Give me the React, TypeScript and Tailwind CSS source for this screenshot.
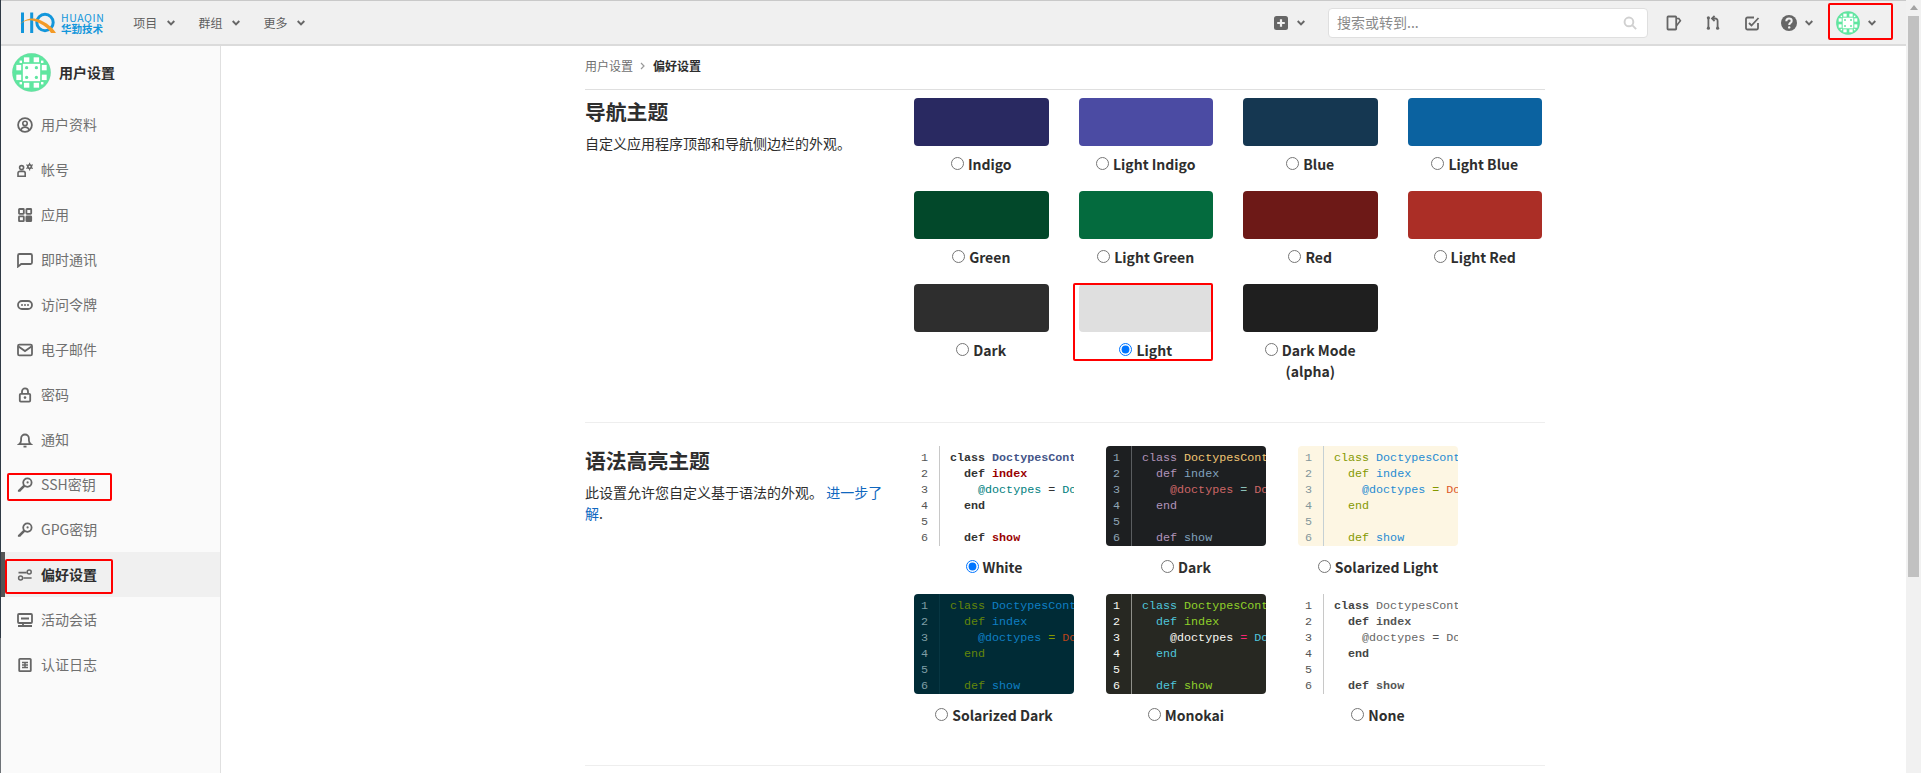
import React from "react";

const S = ({ children, className = "" }: { children: React.ReactNode; className?: string }) => (
  <svg viewBox="0 0 16 16" className={`h-4 w-4 shrink-0 ${className}`} fill="none" stroke="currentColor" strokeWidth={1.8}>
    {children}
  </svg>
);

const icons: Record<string, React.ReactNode> = {
  profile: (
    <>
      <circle cx="8" cy="8" r="6.9" />
      <circle cx="8" cy="6.4" r="2.2" strokeWidth={1.6} />
      <path d="M3.8 12.8c.9-1.8 2.4-2.7 4.2-2.7s3.3.9 4.2 2.7" strokeWidth={1.6} />
    </>
  ),
  account: (
    <>
      <circle cx="4.6" cy="5.6" r="2" strokeWidth={1.6} />
      <path d="M1 14.2v-3a1.8 1.8 0 0 1 1.8-1.8h3.6a1.8 1.8 0 0 1 1.8 1.8v3z" strokeWidth={1.6} />
      <circle cx="12.6" cy="4.6" r="2.6" fill="currentColor" stroke="none" />
      <path d="M12.6.8v7.6M9.3 2.7l6.6 3.8M15.9 2.7 9.3 6.5" strokeWidth={1.1} />
      <circle cx="12.6" cy="4.6" r=".9" fill="#fafafa" stroke="none" />
    </>
  ),
  apps: (
    <>
      <rect x="2" y="2" width="4.8" height="4.8" rx=".5" />
      <rect x="9.4" y="2" width="4.8" height="4.8" rx=".5" />
      <rect x="2" y="9.4" width="4.8" height="4.8" rx=".5" />
      <rect x="9.4" y="9.4" width="4.8" height="4.8" rx=".5" fill="currentColor" />
    </>
  ),
  chat: <path d="M2.5 2h11A1.5 1.5 0 0 1 15 3.5v7a1.5 1.5 0 0 1-1.5 1.5H4.2L1 14.6V3.5A1.5 1.5 0 0 1 2.5 2z" />,
  token: (
    <>
      <rect x="1" y="4" width="14" height="8" rx="4" />
      <circle cx="5" cy="8" r="1" fill="currentColor" stroke="none" />
      <circle cx="8" cy="8" r="1" fill="currentColor" stroke="none" />
      <circle cx="11" cy="8" r="1" fill="currentColor" stroke="none" />
    </>
  ),
  mail: (
    <>
      <rect x="1" y="2.6" width="14" height="10.8" rx="1.4" />
      <path d="m1.5 4.5 6.5 4.6 6.5-4.6" />
    </>
  ),
  lock: (
    <>
      <rect x="2.8" y="6.8" width="10.4" height="7.8" rx="1" />
      <path d="M5 6.8V4.4a3 3 0 0 1 6 0v2.4" />
      <circle cx="8" cy="10.6" r="1.3" fill="currentColor" stroke="none" />
    </>
  ),
  bell: (
    <>
      <path d="M2.2 12.2h11.6c-1.3-1-1.9-2-1.9-4V6.4a3.9 3.9 0 0 0-7.8 0v1.8c0 2-.6 3-1.9 4z" />
      <path d="M6.5 14.6h3" />
    </>
  ),
  key: (
    <>
      <circle cx="10.4" cy="5.6" r="4.2" />
      <circle cx="10.6" cy="5.4" r="1.1" fill="currentColor" stroke="none" />
      <path d="M7.4 8.6 2.2 13.8v1" strokeWidth={2.6} />
    </>
  ),
  prefs: (
    <>
      <path d="M1.5 5.6h8.2M6.4 11H14.6" strokeWidth={1.6} />
      <circle cx="12.2" cy="5" r="2" strokeWidth={1.5} />
      <circle cx="3.6" cy="11" r="2" strokeWidth={1.5} />
    </>
  ),
  monitor: (
    <>
      <rect x="1" y="2" width="14" height="9" rx="1" />
      <path d="M4 6.5h8" strokeWidth={2} />
      <path d="M6 11v2.6M1 14h14" strokeWidth={1.8} />
    </>
  ),
  log: (
    <>
      <rect x="2.2" y="1.8" width="11.6" height="12.4" rx=".8" />
      <path d="M5 5.6h6M5 8h6M5 10.5h6M8 5v6" strokeWidth={1.5} />
    </>
  ),
};

const Chevron = () => (
  <svg viewBox="0 0 8 6" className="h-[6px] w-[8px] shrink-0" fill="none" stroke="#666" strokeWidth={1.9}>
    <path d="m.7 1 3.3 3.3L7.3 1" />
  </svg>
);

function Avatar({ className }: { className: string }) {
  const white: number[][] = [
    [44, 16, 20, 18], [80, 16, 20, 18], [44, 110, 20, 18], [80, 110, 20, 18],
    [16, 44, 18, 20], [16, 80, 18, 20], [110, 44, 18, 20], [110, 80, 18, 20],
    [28, 28, 9, 9], [107, 28, 9, 9], [28, 107, 9, 9], [107, 107, 9, 9],
  ];
  const dots: number[][] = [[54, 54], [90, 54], [54, 90], [90, 90]];
  return (
    <svg viewBox="0 0 144 144" className={className}>
      <circle cx="72" cy="72" r="71" fill="#5fe6a0" stroke="#00000018" strokeWidth="2" />
      <rect x="40" y="40" width="64" height="64" fill="#fff" />
      {white.map((r, i) => (
        <rect key={i} x={r[0]} y={r[1]} width={r[2]} height={r[3]} fill="#fff" />
      ))}
      {dots.map((d, i) => (
        <circle key={i} cx={d[0]} cy={d[1]} r="6" fill="#5fe6a0" />
      ))}
    </svg>
  );
}

const Logo = () => (
  <div className="flex items-center">
    <svg viewBox="0 0 37 22" className="h-[22px] w-[37px]">
      <rect x="1" y="0.5" width="3" height="20.5" fill="#1296db" />
      <rect x="10.2" y="0.5" width="3" height="20.5" fill="#1296db" />
      <circle cx="25" cy="10.5" r="8.2" fill="none" stroke="#1296db" strokeWidth="3" />
      <path d="M0 12.5C6 7 12 7.5 19 11c6 3 10 6 12 10h5c-4-6-9-10-16-13C12 4.600 4 7 0 12.500z" fill="#f39a26" />
    </svg>
    <div className="ml-[4px] flex flex-col text-[#1296db]">
      <span className="text-[10.500px] leading-[11px] tracking-[0.6px]">HUAQIN</span>
      <span className="text-[10.500px] font-bold leading-[11px]">华勤技术</span>
    </div>
  </div>
);

const NavItem = ({ label, className }: { label: string; className: string }) => (
  <div className={`flex items-center gap-[10px] text-[12px] text-[#5f5f5f] ${className}`}>
    <span>{label}</span>
    <Chevron />
  </div>
);

function Header() {
  return (
    <header className="flex h-[46px] shrink-0 items-center border-t border-b-2 border-t-[#c9c9c9] border-b-[#dbdbdb] bg-[#f0f0f0]">
      <div className="ml-[19px]">
        <Logo />
      </div>
      <NavItem label="项目" className="ml-[29px]" />
      <NavItem label="群组" className="ml-[23px]" />
      <NavItem label="更多" className="ml-[23px]" />
      <div className="ml-auto flex items-center text-[#666]">
        <svg viewBox="0 0 14 14" className="h-[14px] w-[14px]">
          <rect width="14" height="14" rx="2.500" fill="#666" />
          <path d="M7 3.200v7.600M3.200 7h7.600" stroke="#f0f0f0" strokeWidth="2.200" />
        </svg>
        <div className="ml-[9px]">
          <Chevron />
        </div>
        <div className="relative ml-[23px] flex h-[30px] w-[320px] items-center rounded-[4px] border border-[#dfdfdf] bg-white pl-[8px] text-[14px] text-[#8a8a8a]">
          搜索或转到...
          <svg viewBox="0 0 16 16" className="absolute right-[10px] top-[7px] h-[14px] w-[14px]" fill="none" stroke="#d0d0d0" strokeWidth="2.200">
            <circle cx="6.800" cy="6.800" r="5" />
            <path d="m10.500 10.500 4.500 4.500" />
          </svg>
        </div>
        <S className="ml-[18px]">
          <path d="M2.200 1.500h7.300c.4 0 .7.300.7.700v11.600c0 .4-.3.700-.7.700H2.200a.7.700 0 0 1-.7-.700V2.200c0-.4.300-.7.700-.700z" />
          <path d="M10.500 3.500h2.300l1.600 2.200-3.900 5" strokeWidth={1.6} />
        </S>
        <S className="ml-[23px]">
          <path d="M3.400 3.500v9" />
          <circle cx="3.400" cy="2.800" r="1.600" fill="currentColor" stroke="none" />
          <circle cx="3.400" cy="13.200" r="1.600" fill="currentColor" stroke="none" />
          <path d="M12.600 12V6a2.500 2.500 0 0 0-2.500-2.500H8" />
          <path d="M9.600 1 7 3.500 9.600 6" />
          <circle cx="12.600" cy="13.200" r="1.600" fill="currentColor" stroke="none" />
        </S>
        <S className="ml-[23px]">
          <path d="M14 8v5a1.500 1.500 0 0 1-1.500 1.500h-9A1.500 1.500 0 0 1 2 13V4a1.500 1.500 0 0 1 1.500-1.500H10" />
          <path d="m5 8 2.500 2.500L14.500 3" />
        </S>
        <svg viewBox="0 0 16 16" className="ml-[21px] h-4 w-4">
          <circle cx="8" cy="8" r="8" fill="#666" />
          <path d="M5.300 6.200c0-1.600 1.200-2.600 2.700-2.600s2.700.900 2.700 2.300c0 2-2.500 2-2.500 4" fill="none" stroke="#f0f0f0" strokeWidth="2" />
          <circle cx="8.200" cy="12.400" r="1.200" fill="#f0f0f0" />
        </svg>
        <div className="ml-[8px]">
          <Chevron />
        </div>
        <Avatar className="ml-[23px] h-[24px] w-[24px]" />
        <div className="ml-[8px] mr-[30px]">
          <Chevron />
        </div>
      </div>
    </header>
  );
}

const navs: [string, string][] = [
  ["profile", "用户资料"], ["account", "帐号"], ["apps", "应用"], ["chat", "即时通讯"],
  ["token", "访问令牌"], ["mail", "电子邮件"], ["lock", "密码"], ["bell", "通知"],
  ["key", "SSH密钥"], ["key", "GPG密钥"], ["prefs", "偏好设置"], ["monitor", "活动会话"], ["log", "认证日志"],
];

function Sidebar() {
  return (
    <aside className="flex w-[220px] shrink-0 flex-col border-r border-[#e0e0e0] bg-[#fafafa]">
      <div className="flex h-[56px] items-center pb-[3px] pl-[11px]">
        <Avatar className="h-[39px] w-[39px]" />
        <span className="ml-[8px] text-[14px] font-bold text-[#2e2e2e]">用户设置</span>
      </div>
      {navs.map(([icon, label]) => {
        const active = label === "偏好设置";
        return (
          <div
            key={label}
            className={
              active
                ? "flex h-[45px] items-center border-l-4 border-[#555] bg-[#f0f0f0] pl-[12px] text-[14px] font-bold text-[#2e2e2e]"
                : "flex h-[45px] items-center pl-[16px] text-[14px] text-[#707070]"
            }
          >
            <span className="text-[#666]">
              <S>{icons[icon]}</S>
            </span>
            <span className="ml-[8px]">{label}</span>
          </div>
        );
      })}
    </aside>
  );
}

const Radio = ({ label, checked, name }: { label: React.ReactNode; checked?: boolean; name: string }) => (
  <label className="block text-center text-[14px] font-bold leading-[21px] text-[#2e2e2e]">
    <input type="radio" name={name} defaultChecked={checked} className="mr-[4px] h-[13px] w-[13px] align-[0px]" />
    {label}
  </label>
);

const swatches: [string, string, boolean?][] = [
  ["Indigo", "bg-[#292961]"], ["Light Indigo", "bg-[#4b4ba3]"], ["Blue", "bg-[#153751]"], ["Light Blue", "bg-[#0b62a0]"],
  ["Green", "bg-[#02482a]"], ["Light Green", "bg-[#046b3e]"], ["Red", "bg-[#6d1917]"], ["Light Red", "bg-[#ab2e26]"],
  ["Dark", "bg-[#2e2e2e]"], ["Light", "bg-[#dfdfdf]", true], ["Dark Mode (alpha)", "bg-[#1f1f1f]"],
];

const themes = [
  { name: "White", checked: true, bg: "bg-white", gut: "text-[#555] border-[#c8c8c8]", kw: "font-bold text-[#333]", cls: "font-bold text-[#445588]", fn: "font-bold text-[#990000]", iv: "text-[#008080]", op: "text-[#333]", con: "text-[#008080]" },
  { name: "Dark", bg: "bg-[#1d1f21]", gut: "text-[#8fa5b5] border-[#5a5d60]", kw: "text-[#b294bb]", cls: "text-[#f0c674]", fn: "text-[#81a2be]", iv: "text-[#cc6666]", op: "text-[#8abeb7]", con: "text-[#cc6666]" },
  { name: "Solarized Light", bg: "bg-[#fdf6e3]", gut: "text-[#84979b] border-[#c5d0d4]", kw: "text-[#859900]", cls: "text-[#268bd2]", fn: "text-[#268bd2]", iv: "text-[#268bd2]", op: "text-[#859900]", con: "text-[#dc5a2a]" },
  { name: "Solarized Dark", bg: "bg-[#002b36]", gut: "text-[#7f9ea5] border-[#073642]", kw: "text-[#64860a]", cls: "text-[#0f7fc4]", fn: "text-[#0f7fc4]", iv: "text-[#0f7fc4]", op: "text-[#859900]", con: "text-[#b8441a]" },
  { name: "Monokai", bg: "bg-[#272822]", gut: "text-[#f8f8f2] border-[#8f908a]", kw: "text-[#4fc6dc]", cls: "text-[#8fd02a]", fn: "text-[#8fd02a]", iv: "text-[#f8f8f2]", op: "text-[#f92672]", con: "text-[#4fc6dc]" },
  { name: "None", bg: "bg-white", gut: "text-[#555] border-[#c8c8c8]", kw: "font-bold text-[#444]", cls: "text-[#666]", fn: "font-bold text-[#555]", iv: "text-[#666]", op: "text-[#555]", con: "text-[#666]" },
];

function Preview({ t }: { t: (typeof themes)[number] }) {
  return (
    <div className={`flex h-[100px] w-[160px] overflow-hidden rounded-[4px] font-['Liberation_Mono',monospace] text-[11.700px] leading-[16px] ${t.bg}`}>
      <div className={`w-[26px] shrink-0 border-r pl-[7px] pt-[4px] ${t.gut}`}>
        {[1, 2, 3, 4, 5, 6].map((n) => (
          <div key={n}>{n}</div>
        ))}
      </div>
      <pre className="pl-[10px] pt-[4px] font-['Liberation_Mono',monospace] text-[11.700px] leading-[16px]">
        <div><span className={t.kw}>class</span> <span className={t.cls}>DoctypesController</span></div>
        <div>  <span className={t.kw}>def</span> <span className={t.fn}>index</span></div>
        <div>    <span className={t.iv}>@doctypes</span> <span className={t.op}>=</span> <span className={t.con}>Doctypes</span></div>
        <div>  <span className={t.kw}>end</span></div>
        <div>&nbsp;</div>
        <div>  <span className={t.kw}>def</span> <span className={t.fn}>show</span></div>
      </pre>
    </div>
  );
}

const RedBox = ({ className }: { className: string }) => (
  <div className={`pointer-events-none absolute rounded-[2px] border-2 border-[#ff0000] ${className}`} />
);

export default function App() {
  return (
    <div className="relative flex h-[773px] overflow-hidden bg-white font-['Noto_Sans_CJK_SC','Noto_Sans',sans-serif]">
      <div className="flex w-px shrink-0 flex-col">
        <div className="h-[638px] bg-[#2f3944]" />
        <div className="flex-1 bg-[#6d7277]" />
      </div>
      <div className="flex min-w-0 flex-1 flex-col">
        <Header />
        <div className="flex min-h-0 flex-1">
          <Sidebar />
          <main className="ml-[364px] w-[960px]">
            <div className="flex h-[44px] items-center gap-[7px] border-b border-[#dfdfdf] pb-[3px] text-[12px] text-[#707070]">
              <span>用户设置</span>
              <svg viewBox="0 0 6 8" className="h-[8px] w-[6px]" fill="none" stroke="#999" strokeWidth="1.200">
                <path d="m1 1 3 3-3 3" />
              </svg>
              <span className="font-bold text-[#2e2e2e]">偏好设置</span>
            </div>
            <section className="flex border-b border-[#eeeeee] pb-[40px] pt-[8px]">
              <div className="-mt-[1px] w-[329px] shrink-0 pr-[24px]">
                <h2 className="mb-[8px] text-[20.800px] font-bold leading-[28px] text-[#2e2e2e]">导航主题</h2>
                <p className="text-[14px] leading-[21px] text-[#2e2e2e]">自定义应用程序顶部和导航侧边栏的外观。</p>
              </div>
              <div className="grid h-fit w-[628px] grid-cols-4 gap-x-[30px] gap-y-[16px]">
                {swatches.map(([label, bg, checked]) => (
                  <div key={label}>
                    <div className={`h-[48px] rounded-[4px] ${bg}`} />
                    <div className="mt-[8px]">
                      <Radio label={label} checked={checked} name="nav" />
                    </div>
                  </div>
                ))}
              </div>
            </section>
            <section className="flex border-b border-[#eeeeee] pb-[39px] pt-[23px]">
              <div className="w-[329px] shrink-0 pr-[24px]">
                <h2 className="mb-[8px] text-[20.800px] font-bold leading-[28px] text-[#2e2e2e]">语法高亮主题</h2>
                <p className="text-[14px] leading-[21px] text-[#2e2e2e]">
                  此设置允许您自定义基于语法的外观。 <span className="text-[#1068bf]">进一步了解</span>.
                </p>
              </div>
              <div className="grid h-fit w-[544px] grid-cols-3 gap-x-[32px] gap-y-[16px]">
                {themes.map((t) => (
                  <div key={t.name}>
                    <Preview t={t} />
                    <div className="mt-[11px]">
                      <Radio label={t.name} checked={t.checked} name="syntax" />
                    </div>
                  </div>
                ))}
              </div>
            </section>
          </main>
        </div>
      </div>
      <div className="flex w-[15px] shrink-0 flex-col items-center bg-[#f1f1f1]">
        <div className="mt-[5px] h-0 w-0 border-x-[4px] border-b-[5px] border-x-transparent border-b-[#a3a3a3]" />
        <div className="mt-[6px] h-[561px] w-[11px] bg-[#c1c1c1]" />
      </div>
      <RedBox className="left-[1828px] top-[3px] h-[37px] w-[65px]" />
      <RedBox className="left-[7px] top-[473px] h-[28px] w-[105px]" />
      <RedBox className="left-[5px] top-[559px] h-[35px] w-[108px]" />
      <RedBox className="left-[1073px] top-[283px] h-[78px] w-[140px]" />
    </div>
  );
}
